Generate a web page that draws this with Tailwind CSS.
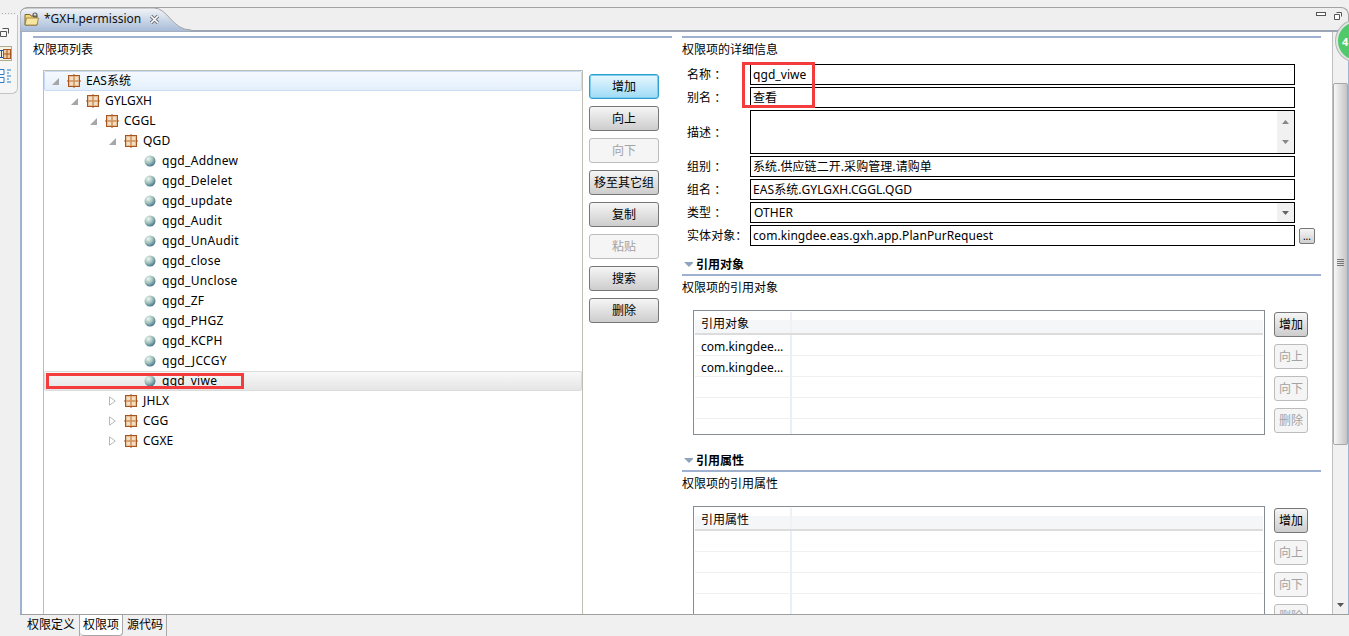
<!DOCTYPE html>
<html lang="zh">
<head>
<meta charset="utf-8">
<title>GXH.permission</title>
<script src="https://cdn.jsdelivr.net/npm/@tailwindcss/browser@4"></script>
</head>
<body class="m-0 overflow-hidden">
<svg class="absolute w-0 h-0 overflow-hidden" width="0" height="0">
  <defs>
    <radialGradient id="sph" cx="35%" cy="30%" r="75%"><stop offset="0" stop-color="#eef5f2"/><stop offset=".5" stop-color="#a3c4bb"/><stop offset="1" stop-color="#3f6f88"/></radialGradient>
    <linearGradient id="tabg" x1="0" y1="0" x2="0" y2="1"><stop offset="0" stop-color="#f3f5f8"/><stop offset="1" stop-color="#a3b9d6"/></linearGradient>
    <symbol id="pkg" viewBox="0 0 14 14">
      <rect x="1.500" y="1.500" width="11" height="11" fill="#e3bd93"/>
      <rect x="3" y="3" width="3" height="3" fill="#f4dfc4"/><rect x="8" y="3" width="3" height="3" fill="#f4dfc4"/><rect x="3" y="8" width="3" height="3" fill="#f4dfc4"/><rect x="8" y="8" width="3" height="3" fill="#f4dfc4"/>
      <path d="M1 1.500H13M1 12.500H13M1.500 1V13M12.500 1V13" stroke="#a9551f" fill="none"/>
      <path d="M7 0V2M7 12V14M0 7H2M12 7H14" stroke="#a9551f"/>
      <path d="M2 7H12M7 2V12" stroke="#c98a55"/>
    </symbol>
    <symbol id="ball" viewBox="0 0 12 12"><circle cx="6" cy="6" r="5.500" fill="url(#sph)"/></symbol>
    <symbol id="open" viewBox="0 0 7 7"><path d="M7 0V7H0Z" fill="#a6a6a6"/></symbol>
    <symbol id="shut" viewBox="0 0 7 10"><path d="M.5.8L6.300 5L.5 9.200Z" fill="#fff" stroke="#b8b8b8"/></symbol>
  </defs>
</svg>

<div class="w-[1349px] h-[636px] overflow-hidden flex bg-[#f0f0f0] text-[12px] text-black font-['Noto_Sans','Noto_Sans_CJK_SC',sans-serif] relative">

  <!-- left trim -->
  <div class="w-[20px] shrink-0 flex flex-col pt-[13px]">
    <div class="flex gap-[2px] pl-[2px] h-[4px]">
      <span class="w-[1px] h-[1px] bg-[#aaa]"></span><span class="w-[1px] h-[1px] bg-[#aaa]"></span><span class="w-[1px] h-[1px] bg-[#aaa]"></span><span class="w-[1px] h-[1px] bg-[#aaa]"></span><span class="w-[1px] h-[1px] bg-[#aaa]"></span>
    </div>
    <div class="w-[18px] h-[79px] mt-[-2px] bg-[#f6f6f6] border-r border-b border-[#c4c4c4] rounded-br-[6px] flex flex-col pt-[13px]">
      <svg width="9" height="9" viewBox="0 0 9 9"><path d="M2.500.5H8.500V5.500M.5 3.500H6.500V8.500H.5Z" fill="none" stroke="#555"/></svg>
      <div class="w-[12px] h-[15px] mt-[9px] bg-[#f5f3e6] border-y border-r border-[#b0aa90] flex items-center">
        <svg width="11" height="12" viewBox="0 0 11 12"><path d="M0 2.500H3M0 9.500H3" stroke="#1f4fa8"/><path d="M1.500 2V10" stroke="#1f4fa8"/><rect x="3.500" y="1.500" width="7" height="9" fill="#eccba0" stroke="#a9551f"/><path d="M7 1.500V10.500M3.500 6H10.500" stroke="#a9551f"/></svg>
      </div>
      <svg width="12" height="16" viewBox="0 0 12 16" class="mt-[7px]"><path d="M0 1.500H4V6.500H0M0 9.500H4V14.500H0" fill="#fff" stroke="#2a7fc4"/><path d="M7 2H11M7 5H9M7 8H11M7 11H9M7 14H11" stroke="#2a7fc4"/></svg>
    </div>
  </div>

  <!-- editor -->
  <div class="flex-1 flex flex-col min-w-0">
    <!-- tab strip -->
    <div class="h-[32px] pt-[7px] shrink-0">
      <div class="h-[25px] flex items-start justify-between rounded-t-[8px] border-t border-x border-[#a3a3a3] border-b-2 border-b-[#9ba5b3] bg-[#efefef]">
        <div class="relative w-[170px] h-[23px]">
          <svg class="absolute left-[-1px] top-[-1px]" width="172" height="25" viewBox="0 0 172 25"><path d="M0 25V8Q0 1 8 1H134C148 1 152 23 171 23V25Z" fill="url(#tabg)" stroke="#a3a3a3"/></svg>
          <div class="relative flex items-center h-[22px] pl-[3px]">
            <svg width="16" height="14" viewBox="0 0 16 14"><path d="M1 4V2.500H6L7 4H13V13H1Z" fill="#f0d878" stroke="#8a6a2a"/><path d="M2.500 6H14.500L13 13H1Z" fill="#f7e6a0" stroke="#8a6a2a" stroke-width=".7"/><circle cx="11" cy="3" r="2" fill="none" stroke="#555" stroke-width="1.100"/></svg>
            <span class="ml-[4px] text-[12px] leading-[16px] text-[#111]">*GXH.permission</span>
            <svg class="ml-[8px]" width="11" height="11" viewBox="0 0 11 11"><path d="M2 2L9 9M9 2L2 9" stroke="#6a6f77" stroke-width="3.200"/><path d="M2 2L9 9M9 2L2 9" stroke="#fff" stroke-width="1.600"/></svg>
          </div>
        </div>
        <div class="flex items-start gap-[8px] pt-[4px] pr-[6px]">
          <span class="block w-[10px] h-[4px] border border-[#555] bg-white"></span>
          <svg width="8" height="8" viewBox="0 0 8 8"><path d="M2.500.5H7.500V4.500M.5 2.500H5.500V7.500H.5Z" fill="#fff" stroke="#555"/></svg>
        </div>
      </div>
    </div>

    <!-- content -->
    <div class="h-[582px] shrink-0 flex bg-white border-l-2 border-r border-[#9db3d0] overflow-hidden pt-[4px]">
      <!-- left column -->
      <div class="ml-[11px] w-[639px] shrink-0">
        <div class="h-[2px] bg-[#9fb1cf]"></div>
        <div class="h-[22px] leading-[23px]">权限项列表</div>
        <div class="flex mt-[10px] items-start">
          <div class="ml-[10px] w-[540px] h-[560px] shrink-0 border-l border-r border-t border-[#bdbdb4] leading-[20px]">
            <div class="h-[20px] flex items-center pl-[7px] border border-[#c7dcf5] rounded-[2px] bg-linear-to-b from-[#f5f9fe] to-[#e4effc]"><svg width="7" height="7"><use href="#open"/></svg><svg class="ml-[8px]" width="14" height="14"><use href="#pkg"/></svg><span class="ml-[5px]">EAS系统</span></div>
            <div class="h-[20px] flex items-center pl-[27px]"><svg width="7" height="7"><use href="#open"/></svg><svg class="ml-[8px]" width="14" height="14"><use href="#pkg"/></svg><span class="ml-[5px] tracking-[.15px]">GYLGXH</span></div>
            <div class="h-[20px] flex items-center pl-[46px]"><svg width="7" height="7"><use href="#open"/></svg><svg class="ml-[8px]" width="14" height="14"><use href="#pkg"/></svg><span class="ml-[5px] tracking-[.15px]">CGGL</span></div>
            <div class="h-[20px] flex items-center pl-[65px]"><svg width="7" height="7"><use href="#open"/></svg><svg class="ml-[8px]" width="14" height="14"><use href="#pkg"/></svg><span class="ml-[5px] tracking-[.15px]">QGD</span></div>
            <div class="h-[20px] flex items-center pl-[100px] tracking-[.3px]"><svg width="12" height="12"><use href="#ball"/></svg><span class="ml-[6px]">qgd_Addnew</span></div>
            <div class="h-[20px] flex items-center pl-[100px] tracking-[.3px]"><svg width="12" height="12"><use href="#ball"/></svg><span class="ml-[6px]">qgd_Delelet</span></div>
            <div class="h-[20px] flex items-center pl-[100px] tracking-[.3px]"><svg width="12" height="12"><use href="#ball"/></svg><span class="ml-[6px]">qgd_update</span></div>
            <div class="h-[20px] flex items-center pl-[100px] tracking-[.3px]"><svg width="12" height="12"><use href="#ball"/></svg><span class="ml-[6px]">qgd_Audit</span></div>
            <div class="h-[20px] flex items-center pl-[100px] tracking-[.3px]"><svg width="12" height="12"><use href="#ball"/></svg><span class="ml-[6px]">qgd_UnAudit</span></div>
            <div class="h-[20px] flex items-center pl-[100px] tracking-[.3px]"><svg width="12" height="12"><use href="#ball"/></svg><span class="ml-[6px]">qgd_close</span></div>
            <div class="h-[20px] flex items-center pl-[100px] tracking-[.3px]"><svg width="12" height="12"><use href="#ball"/></svg><span class="ml-[6px]">qgd_Unclose</span></div>
            <div class="h-[20px] flex items-center pl-[100px] tracking-[.3px]"><svg width="12" height="12"><use href="#ball"/></svg><span class="ml-[6px]">qgd_ZF</span></div>
            <div class="h-[20px] flex items-center pl-[100px] tracking-[.3px]"><svg width="12" height="12"><use href="#ball"/></svg><span class="ml-[6px]">qgd_PHGZ</span></div>
            <div class="h-[20px] flex items-center pl-[100px] tracking-[.3px]"><svg width="12" height="12"><use href="#ball"/></svg><span class="ml-[6px]">qgd_KCPH</span></div>
            <div class="h-[20px] flex items-center pl-[100px] tracking-[.3px]"><svg width="12" height="12"><use href="#ball"/></svg><span class="ml-[6px]">qgd_JCCGY</span></div>
            <div class="h-[20px] flex items-center pl-[99px] tracking-[.3px] border border-[#dcdcdc] rounded-[2px] bg-linear-to-b from-[#f8f8f8] to-[#e5e5e5]"><svg width="12" height="12"><use href="#ball"/></svg><span class="ml-[6px]">qgd_viwe</span></div>
            <div class="h-[20px] flex items-center pl-[65px]"><svg width="7" height="10"><use href="#shut"/></svg><svg class="ml-[8px]" width="14" height="14"><use href="#pkg"/></svg><span class="ml-[5px] tracking-[.15px]">JHLX</span></div>
            <div class="h-[20px] flex items-center pl-[65px]"><svg width="7" height="10"><use href="#shut"/></svg><svg class="ml-[8px]" width="14" height="14"><use href="#pkg"/></svg><span class="ml-[5px] tracking-[.15px]">CGG</span></div>
            <div class="h-[20px] flex items-center pl-[65px]"><svg width="7" height="10"><use href="#shut"/></svg><svg class="ml-[8px]" width="14" height="14"><use href="#pkg"/></svg><span class="ml-[5px] tracking-[.15px]">CGXE</span></div>
          </div>
          <div class="ml-[6px] mt-[4px] w-[70px] flex flex-col gap-[7px] shrink-0">
            <button class="h-[25px] rounded-[3px] border border-[#2f9fd0] bg-linear-to-b from-[#e8f7fe] to-[#9edbf6] shadow-[inset_0_0_0_1px_#7ccdf0]">增加</button>
            <button class="h-[25px] rounded-[3px] border border-[#777] bg-linear-to-b from-[#f5f5f5] to-[#cdcdcd]">向上</button>
            <button class="h-[25px] rounded-[3px] border border-[#bcbcbc] bg-[#f5f5f5] text-[#a3a3a3]">向下</button>
            <button class="h-[25px] rounded-[3px] border border-[#777] bg-linear-to-b from-[#f5f5f5] to-[#cdcdcd]">移至其它组</button>
            <button class="h-[25px] rounded-[3px] border border-[#777] bg-linear-to-b from-[#f5f5f5] to-[#cdcdcd]">复制</button>
            <button class="h-[25px] rounded-[3px] border border-[#bcbcbc] bg-[#f5f5f5] text-[#a3a3a3]">粘贴</button>
            <button class="h-[25px] rounded-[3px] border border-[#777] bg-linear-to-b from-[#f5f5f5] to-[#cdcdcd]">搜索</button>
            <button class="h-[25px] rounded-[3px] border border-[#777] bg-linear-to-b from-[#f5f5f5] to-[#cdcdcd]">删除</button>
          </div>
        </div>
      </div>

      <!-- right column -->
      <div class="ml-[10px] w-[639px] shrink-0">
        <div class="h-[2px] bg-[#9fb1cf]"></div>
        <div class="h-[22px] leading-[23px]">权限项的详细信息</div>
        <div class="mt-[4px] flex flex-col gap-[2px] leading-[19px] tracking-[.07px]">
          <div class="flex h-[21px]"><span class="w-[68px] pl-[5px] leading-[22px]">名称 ：</span><div class="w-[545px] border border-black pl-[2px]">qgd_viwe</div></div>
          <div class="flex h-[21px]"><span class="w-[68px] pl-[5px] leading-[22px]">别名 ：</span><div class="w-[545px] border border-black pl-[2px]">查看</div></div>
          <div class="flex h-[44px]"><span class="w-[68px] pl-[5px] leading-[45px]">描述 ：</span><div class="w-[545px] border border-black flex justify-end"><div class="w-[17px] bg-[#f1f1f1] flex flex-col justify-between items-center py-[9px]"><svg width="7" height="4"><path d="M3.500 0L7 4H0Z" fill="#888"/></svg><svg width="7" height="4"><path d="M0 0H7L3.500 4Z" fill="#888"/></svg></div></div></div>
          <div class="flex h-[21px]"><span class="w-[68px] pl-[5px] leading-[22px]">组别 ：</span><div class="w-[545px] border border-black pl-[2px]">系统.供应链二开.采购管理.请购单</div></div>
          <div class="flex h-[21px]"><span class="w-[68px] pl-[5px] leading-[22px]">组名 ：</span><div class="w-[545px] border border-black pl-[2px]">EAS系统.GYLGXH.CGGL.QGD</div></div>
          <div class="flex h-[21px]"><span class="w-[68px] pl-[5px] leading-[22px]">类型 ：</span><div class="w-[545px] border border-black pl-[3px] flex justify-between">OTHER<div class="w-[17px] bg-[#f1f1f1] flex items-center justify-center"><svg width="7" height="4"><path d="M0 0H7L3.500 4Z" fill="#666"/></svg></div></div></div>
          <div class="flex h-[21px]"><span class="w-[68px] pl-[5px] leading-[22px] whitespace-nowrap">实体对象：</span><div class="w-[545px] border border-black pl-[2px]">com.kingdee.eas.gxh.app.PlanPurRequest</div><button class="ml-[4px] w-[16px] h-[16px] mt-[3px] rounded-[2px] border border-[#777] bg-linear-to-b from-[#f5f5f5] to-[#d0d0d0] text-[10px] leading-[12px]">...</button></div>
        </div>

        <div class="mt-[8px] h-[20px] pt-[2px] flex items-center font-bold"><svg class="ml-[2px] mr-[3px] mt-[-2px]" width="9" height="5"><path d="M0 0H10L5 5Z" fill="#8fa3bf"/></svg>引用对象</div>
        <div class="h-[2px] bg-[#9fb1cf]"></div>
        <div class="h-[22px] leading-[23px]">权限项的引用对象</div>
        <div class="mt-[12px] flex items-start">
          <div class="ml-[11px] w-[572px] h-[125px] shrink-0 border border-[#858c94] p-[1px] overflow-hidden">
            <div class="h-[23px] flex border-b-2 border-[#dcdcdc] bg-linear-to-b from-white from-40% to-[#f5f6f8] to-40% leading-[24px]"><div class="w-[97px] pl-[6px] border-r-2 border-[#eef2f7]">引用对象</div></div>
            <div class="h-[21px] flex border-b border-[#eef0f2] leading-[24px]"><div class="w-[97px] pl-[6px] border-r-2 border-[#e9eff7] whitespace-nowrap">com.kingdee...</div></div>
            <div class="h-[21px] flex border-b border-[#eef0f2] leading-[24px]"><div class="w-[97px] pl-[6px] border-r-2 border-[#e9eff7] whitespace-nowrap">com.kingdee...</div></div>
            <div class="h-[21px] flex border-b border-[#eef0f2]"><div class="w-[97px] border-r-2 border-[#e9eff7]"></div></div>
            <div class="h-[21px] flex border-b border-[#eef0f2]"><div class="w-[97px] border-r-2 border-[#e9eff7]"></div></div>
            <div class="h-[21px] flex"><div class="w-[97px] border-r-2 border-[#e9eff7]"></div></div>
          </div>
          <div class="ml-[9px] mt-[2px] w-[34px] flex flex-col gap-[7px] shrink-0">
            <button class="h-[25px] rounded-[3px] border border-[#777] bg-linear-to-b from-[#f5f5f5] to-[#cdcdcd]">增加</button>
            <button class="h-[25px] rounded-[3px] border border-[#bcbcbc] bg-[#f5f5f5] text-[#a3a3a3]">向上</button>
            <button class="h-[25px] rounded-[3px] border border-[#bcbcbc] bg-[#f5f5f5] text-[#a3a3a3]">向下</button>
            <button class="h-[25px] rounded-[3px] border border-[#bcbcbc] bg-[#f5f5f5] text-[#a3a3a3]">删除</button>
          </div>
        </div>

        <div class="mt-[15px] h-[20px] pt-[2px] flex items-center font-bold"><svg class="ml-[2px] mr-[3px] mt-[-2px]" width="9" height="5"><path d="M0 0H10L5 5Z" fill="#8fa3bf"/></svg>引用属性</div>
        <div class="h-[2px] bg-[#9fb1cf]"></div>
        <div class="h-[22px] leading-[23px]">权限项的引用属性</div>
        <div class="mt-[12px] flex items-start">
          <div class="ml-[11px] w-[572px] h-[125px] shrink-0 border border-[#858c94] p-[1px] overflow-hidden">
            <div class="h-[23px] flex border-b-2 border-[#dcdcdc] bg-linear-to-b from-white from-40% to-[#f5f6f8] to-40% leading-[24px]"><div class="w-[97px] pl-[6px] border-r-2 border-[#eef2f7]">引用属性</div></div>
            <div class="h-[21px] flex border-b border-[#eef0f2]"><div class="w-[97px] border-r-2 border-[#e9eff7]"></div></div>
            <div class="h-[21px] flex border-b border-[#eef0f2]"><div class="w-[97px] border-r-2 border-[#e9eff7]"></div></div>
            <div class="h-[21px] flex border-b border-[#eef0f2]"><div class="w-[97px] border-r-2 border-[#e9eff7]"></div></div>
            <div class="h-[21px] flex border-b border-[#eef0f2]"><div class="w-[97px] border-r-2 border-[#e9eff7]"></div></div>
          </div>
          <div class="ml-[9px] mt-[2px] w-[34px] flex flex-col gap-[7px] shrink-0">
            <button class="h-[25px] rounded-[3px] border border-[#777] bg-linear-to-b from-[#f5f5f5] to-[#cdcdcd]">增加</button>
            <button class="h-[25px] rounded-[3px] border border-[#bcbcbc] bg-[#f5f5f5] text-[#a3a3a3]">向上</button>
            <button class="h-[25px] rounded-[3px] border border-[#bcbcbc] bg-[#f5f5f5] text-[#a3a3a3]">向下</button>
            <button class="h-[25px] rounded-[3px] border border-[#bcbcbc] bg-[#f5f5f5] text-[#a3a3a3]">删除</button>
          </div>
        </div>
      </div>

      <!-- scrollbar -->
      <div class="ml-[11px] w-[16px] mt-[-4px] h-[582px] shrink-0 border-l border-[#bfbfbf] bg-[#f1f1f1] flex flex-col items-center">
        <div class="mt-[51px] w-[15px] h-[362px] rounded-[2px] border border-[#a8a8a8] bg-linear-to-r from-[#f8f8f8] to-[#c4c4c4] flex flex-col items-center justify-center gap-[1px] pb-[4px]">
          <span class="w-[7px] h-[1px] bg-[#777]"></span><span class="w-[7px] h-[1px] bg-[#777]"></span><span class="w-[7px] h-[1px] bg-[#777]"></span><span class="w-[7px] h-[1px] bg-[#777]"></span>
        </div>
        <svg class="mt-[158px]" width="7" height="4"><path d="M0 0H7L3.500 4Z" fill="#555"/></svg>
      </div>
    </div>

    <!-- bottom tabs -->
    <div class="flex-1 flex border-t border-[#9f9f9f] pl-[2px] items-start">
      <div class="w-[58px] h-[21px] pl-[5px] leading-[20px] border-r border-[#a8a8a8]">权限定义</div>
      <div class="w-[43px] h-[21px] pl-[3px] leading-[20px] bg-white border-r border-b border-[#a8a8a8] rounded-b-[4px]">权限项</div>
      <div class="w-[44px] h-[21px] pl-[4px] leading-[20px] bg-[#f0f0f0] border-r border-[#a8a8a8]">源代码</div>
    </div>
  </div>

  <!-- overlays: annotations and badge -->
  <div class="absolute left-[46px] top-[373px] w-[198px] h-[16px] border-[3px] border-[#f43c3c]"></div>
  <div class="absolute left-[742px] top-[62px] w-[73px] h-[46px] border-[3px] border-[#f43c3c]"></div>
  <div class="absolute left-[1336px] top-[20px] w-[42px] h-[42px] rounded-full bg-[#4fc96a] border-[2px] border-[#dfe6e2] shadow-[0_0_0_1px_#b5b5b5] flex items-center pl-[4px]"><span class="font-bold text-white text-[11px] leading-none">4</span></div>
</div>
</body>
</html>
